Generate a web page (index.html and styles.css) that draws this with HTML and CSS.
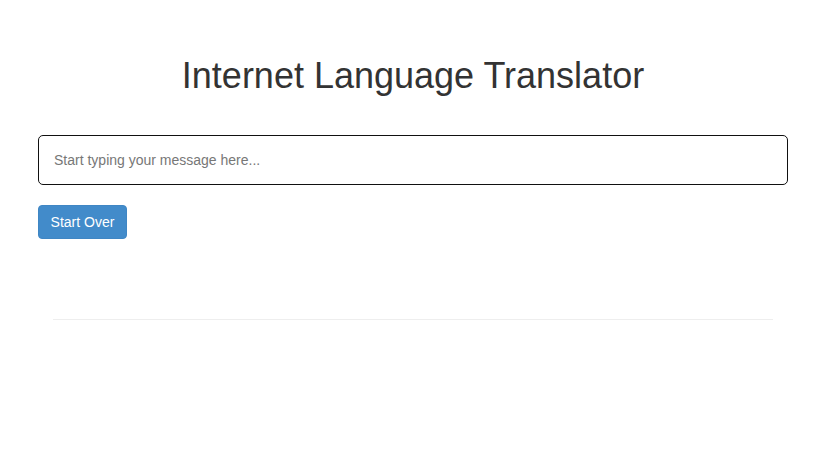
FILE: index.html
```html
<!DOCTYPE html>
<html>
<head>
<meta charset="utf-8">
<title>Internet Language Translator</title>
<link rel="stylesheet" href="styles.css">
</head>
<body>
<div class="page">
  <h1 class="title">Internet Language Translator</h1>
  <input class="message" type="text" placeholder="Start typing your message here...">
  <button class="btn-primary" type="button">Start Over</button>
  <div class="results">
    <hr class="divider">
  </div>
</div>
</body>
</html>
```
FILE: styles.css
```css
html, body {
  margin: 0;
  padding: 0;
  background: #fff;
}
body {
  font-family: "Liberation Sans", Arial, sans-serif;
  font-size: 14px;
  color: #333;
}
.page {
  width: 750px;
  margin-left: 38px;
  display: flex;
  flex-direction: column;
  align-items: flex-start;
}
.title {
  align-self: stretch;
  text-align: center;
  font-weight: 400;
  font-size: 36px;
  line-height: 40px;
  margin: 56px 0 39px;
  color: #333;
}
.message {
  box-sizing: border-box;
  width: 750px;
  height: 50px;
  border: 1px solid #111;
  border-radius: 5px;
  padding: 0 15px;
  font-family: "Liberation Sans", Arial, sans-serif;
  font-size: 14px;
  color: #555;
  outline: none;
}
.message::placeholder {
  color: #777;
}
.btn-primary {
  margin-top: 20px;
  box-sizing: border-box;
  width: 89px;
  height: 34px;
  padding: 0;
  text-align: center;
  background: #428bca;
  border: 1px solid #3f86c4;
  border-radius: 4px;
  color: #fff;
  font-family: "Liberation Sans", Arial, sans-serif;
  font-size: 14px;
}
.results {
  align-self: stretch;
  padding: 0 15px;
  margin-top: 80px;
}
.divider {
  margin: 0;
  border: 0;
  border-top: 1px solid #eee;
}
```
